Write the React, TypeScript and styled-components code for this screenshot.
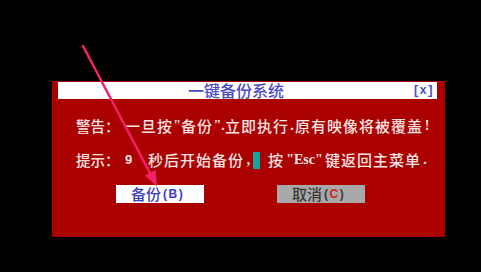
import React from "react";
import styled, { createGlobalStyle } from "styled-components";

const Global = createGlobalStyle`
  html, body { margin: 0; padding: 0; background: #000; }
  body { width: 481px; height: 272px; overflow: hidden; }
`;

const Screen = styled.div`
  position: relative;
  width: 481px;
  height: 272px;
  box-sizing: border-box;
  padding: 81px 0 0 52px;
  background: #000;
  font-family: "Noto Sans CJK SC", "Liberation Sans", sans-serif;
`;

const Panel = styled.div`
  width: 393px;
  height: 156px;
  background: #ab0000;
  display: flex;
  flex-direction: column;
`;

const TitleBar = styled.div`
  margin: 1px 8px 0 6px;
  height: 17px;
  background: #fff;
  display: flex;
  align-items: center;
`;

const Title = styled.span`
  margin-left: 130px;
  font-size: 16px;
  line-height: 17px;
  font-weight: 500;
  color: #4a4ac4;
`;

const Close = styled.span`
  margin-left: auto;
  margin-right: 3px;
  font-family: "Liberation Mono", monospace;
  font-weight: bold;
  font-size: 12px;
  color: #4a4ac4;
`;

const Line = styled.div<{ $top: number }>`
  margin-top: ${(p) => p.$top}px;
  padding-left: 24px;
  height: 18px;
  display: flex;
  align-items: center;
  font-size: 15px;
  letter-spacing: 1px;
  line-height: 18px;
  font-weight: 500;
  color: #f6e4e4;
  white-space: nowrap;
`;

const Label = styled.span`
  width: 49px;
  letter-spacing: 0;
  font-size: 14.5px;
`;

const Punct = styled.span<{ $w: number }>`
  display: inline-block;
  width: ${(p) => p.$w}px;
  text-align: center;
  letter-spacing: 0;
  font-family: "Liberation Serif", serif;
  font-weight: bold;
  font-size: 14px;
`;

const Num = styled.span`
  width: 23px;
  font-family: "Liberation Sans", sans-serif;
  font-weight: bold;
  font-size: 13px;
`;

const Cursor = styled.span`
  display: inline-block;
  width: 7px;
  height: 17px;
  margin: 0 8px 0 0;
  background: #18a4a0;
`;

const ButtonRow = styled.div`
  margin-top: 16px;
  padding-left: 64px;
  display: flex;
  gap: 73px;
`;

const Button = styled.div<{ $active?: boolean }>`
  width: 88px;
  height: 18px;
  box-sizing: border-box;
  padding-left: 15px;
  display: flex;
  align-items: center;
  background: ${(p) => (p.$active ? "#fff" : "#a9a9a9")};
  color: ${(p) => (p.$active ? "#3c3cc0" : "#3a3a3a")};
  font-size: 15px;
  font-weight: 500;
  line-height: 18px;
`;

const Key = styled.span<{ $color: string }>`
  margin-left: 2px;
  font-family: "Liberation Sans", sans-serif;
  font-weight: bold;
  font-size: 12px;
  letter-spacing: 1.5px;
  color: ${(p) => p.$color};
`;

const KeyLetter = styled.span<{ $color: string }>`
  color: ${(p) => p.$color};
`;

const Overlay = styled.svg`
  position: absolute;
  left: 0;
  top: 0;
  pointer-events: none;
`;

export default function App() {
  return (
    <>
      <Global />
      <Screen>
        <Panel>
          <TitleBar>
            <Title>一键备份系统</Title>
            <Close>[x]</Close>
          </TitleBar>
          <Line $top={18}>
            <Label>警告：</Label>
            <span>一旦按</span>
            <Punct $w={8}>"</Punct>
            <span>备份</span>
            <Punct $w={12}>".</Punct>
            <span>立即执行</span>
            <Punct $w={6}>.</Punct>
            <span>原有映像将被覆盖</span>
            <Punct $w={8}>!</Punct>
          </Line>
          <Line $top={16}>
            <Label>提示：</Label>
            <Num>9</Num>
            <span>秒后开始备份</span>
            <Punct $w={9}>,</Punct>
            <Cursor />
            <span>按</span>
            <Punct $w={41}>"Esc"</Punct>
            <span>键返回主菜单</span>
            <Punct $w={8}>.</Punct>
          </Line>
          <ButtonRow>
            <Button $active>
              备份
              <Key $color="#3c3cc0">(B)</Key>
            </Button>
            <Button>
              取消
              <Key $color="#3a3a3a">
                (<KeyLetter $color="#d82020">C</KeyLetter>)
              </Key>
            </Button>
          </ButtonRow>
        </Panel>
        <Overlay width="481" height="272" viewBox="0 0 481 272">
          <line x1="83" y1="46" x2="151" y2="175" stroke="#f5206c" strokeWidth="2.5" strokeLinecap="round" />
          <polygon points="157,186.5 155.5,170 145,175.5" fill="#f5206c" />
        </Overlay>
      </Screen>
    </>
  );
}
